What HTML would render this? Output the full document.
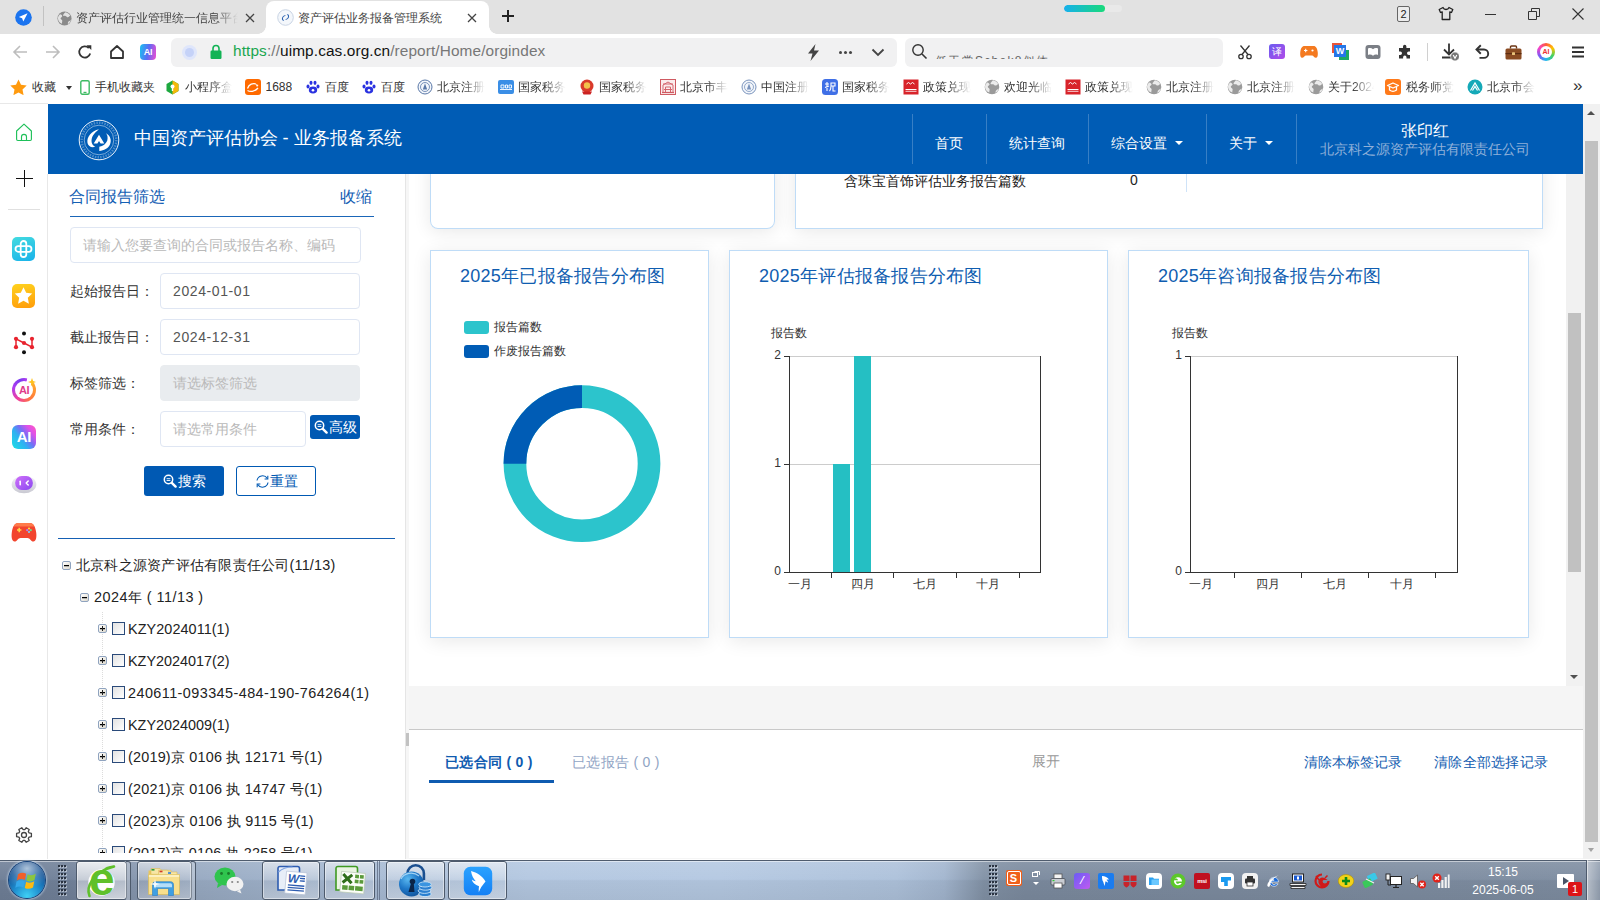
<!DOCTYPE html>
<html lang="zh">
<head>
<meta charset="utf-8">
<title>资产评估业务报备管理系统</title>
<style>
*{box-sizing:border-box;margin:0;padding:0}
html,body{width:1600px;height:900px;overflow:hidden;background:#fff}
body{font-family:"Liberation Sans",sans-serif;font-size:14px;color:#222;position:relative}
.abs{position:absolute}
/* ---------- browser chrome ---------- */
#tabbar{position:absolute;left:0;top:0;width:1600px;height:34px;background:#e2e2e2}
#tab2{position:absolute;left:266px;top:1px;width:223px;height:33px;background:#fff;border-radius:8px 8px 0 0}
#tab2:before,#tab2:after{content:"";position:absolute;bottom:0;width:8px;height:8px}
#tab2:before{left:-8px;background:radial-gradient(circle at 0 0,transparent 7.500px,#fff 8px)}
#tab2:after{right:-8px;background:radial-gradient(circle at 100% 0,transparent 7.500px,#fff 8px)}
.tabtxt{position:absolute;top:10px;font-size:12.5px;color:#333;white-space:nowrap;overflow:hidden}
#toolbar{position:absolute;left:0;top:34px;width:1600px;height:36px;background:#fff}
#urlbox{position:absolute;left:171px;top:4px;width:726px;height:29px;background:#f1f1f2;border-radius:6px}
#searchbox{position:absolute;left:905px;top:4px;width:318px;height:29px;background:#f1f1f2;border-radius:6px}
#url{position:absolute;left:62px;top:4px;font-size:15.400px;color:#777;white-space:nowrap;letter-spacing:0.1px}
#bookmarks{position:absolute;left:0;top:70px;width:1600px;height:34px;background:#fff}
.bm{position:absolute;top:9px;font-size:13px;color:#333;white-space:nowrap}
.bmi{position:absolute;top:9px;width:15px;height:15px;border-radius:3px}
/* ---------- left browser sidebar ---------- */
#bside{position:absolute;left:0;top:104px;width:48px;height:755px;background:#fff}
#bside:before{content:"";position:absolute;left:0;top:-1px;width:48px;height:1px;background:#e8e8e8}
#bside:after{content:"";position:absolute;left:47px;top:70px;width:1px;height:685px;background:#e8e8e8}
/* ---------- page ---------- */
#hdr{position:absolute;left:48px;top:104px;width:1535px;height:70px;background:#005cb5}
#oscroll{position:absolute;left:1583px;top:104px;width:17px;height:755px;background:#f1f1f1}
#leftpanel{position:absolute;left:48px;top:174px;width:357px;height:684px;background:#fff}
#split{position:absolute;left:405px;top:174px;width:4px;height:685px;background:linear-gradient(90deg,#e5e5e5 0,#e5e5e5 1px,#f6f6f6 1px)}
#main{position:absolute;left:409px;top:174px;width:1174px;height:685px;background:#f5f5f5}
#scrollarea{position:absolute;left:0;top:0;width:1174px;height:512px;background:#fff;overflow:hidden}
#iscroll{position:absolute;left:1157px;top:0;width:17px;height:512px;background:#f1f1f1}
#bottompanel{position:absolute;left:0;top:555px;width:1174px;height:129px;background:#fff;border-top:1px solid #c9c9c9}
.card{position:absolute;background:#fff;box-shadow:inset 0 0 0 1px #bfdcf7,0 3px 18px rgba(0,0,0,.09)}
.ctitle{position:absolute;left:30px;top:14px;font-size:18px;letter-spacing:.25px;color:#0f5db0;white-space:nowrap}

/* header */
#hdr .title{position:absolute;left:85.500px;top:22px;font-size:18.200px;color:#fff;white-space:nowrap;line-height:24px}
#hdr .sep{position:absolute;top:10px;width:1px;height:50px;background:rgba(255,255,255,.22)}
#hdr .nav{position:absolute;top:29px;font-size:14px;color:#fff;white-space:nowrap;line-height:20px}
#hdr .caret{display:inline-block;width:0;height:0;border-left:4px solid transparent;border-right:4px solid transparent;border-top:4px solid #fff;vertical-align:middle;margin-left:8px;margin-top:-3px}
#hdr .uname{position:absolute;left:1249px;width:256px;top:15px;text-align:center;font-size:16.400px;color:#fff;line-height:22px}
#hdr .ucomp{position:absolute;left:1249px;width:256px;top:35px;text-align:center;font-size:14px;color:#8fb0d9;line-height:20px;white-space:nowrap}
/* left panel */
#leftpanel .ptitle{position:absolute;left:21px;top:11.500px;font-size:16px;color:#1560b4;line-height:22px}
#leftpanel .pshrink{position:absolute;right:33px;top:11.500px;font-size:16px;color:#1560b4;line-height:22px}
#leftpanel .pline{position:absolute;left:22px;top:42px;width:304px;height:1px;background:#1a66b8}
.inp{position:absolute;background:#fff;border:1px solid #dfe6f3;border-radius:4px;font-size:14px;color:#555;line-height:35.500px;padding-left:12px;white-space:nowrap;overflow:hidden}
.inp.ph{color:#b9b9b9}
.lbl{position:absolute;left:22px;font-size:14px;color:#333;line-height:20px;white-space:nowrap}
.btnb{position:absolute;background:#0059b3;color:#fff;border-radius:3px;font-size:14px;text-align:center;white-space:nowrap}
.btnw{position:absolute;background:#fff;color:#0059b3;border:1px solid #0059b3;border-radius:3px;font-size:14px;text-align:center;white-space:nowrap}
#leftpanel .hline{position:absolute;left:10px;top:364px;width:337px;height:1px;background:#1560b4}
.tr{position:absolute;font-size:14.4px;color:#222;line-height:20px;white-space:nowrap}
.tbox{position:absolute;width:9px;height:9px;border:1px solid #8fa3bf;background:linear-gradient(135deg,#fff,#dcd8cc);border-radius:2px}
.tbox:before{content:"";position:absolute;left:1px;top:3px;width:5px;height:1px;background:#000;box-shadow:0 .5px 0 rgba(0,0,0,.5)}
.tbox.plus:after{content:"";position:absolute;left:3px;top:1px;width:1px;height:5px;background:#222}
.chk{position:absolute;width:13px;height:13px;border:1px solid #2a4a7a;background:linear-gradient(135deg,#e2e2e2,#fff);}

.ax{position:absolute;font-size:12px;color:#333;line-height:14px;white-space:nowrap}
.arrow-up{position:absolute;width:0;height:0;border-left:4px solid transparent;border-right:4px solid transparent;border-bottom:4px solid #505050}
.arrow-dn{position:absolute;width:0;height:0;border-left:4px solid transparent;border-right:4px solid transparent;border-top:4px solid #505050}
.thumb{position:absolute;background:#c1c1c1}
#bottompanel .t{position:absolute;font-size:14px;line-height:20px;white-space:nowrap}
/* ---------- taskbar ---------- */

#taskbar{position:absolute;left:0;top:860px;width:1600px;height:40px;background:linear-gradient(#4f5c6e 0,#4f5c6e 1px,rgba(255,255,255,.55) 1px,rgba(255,255,255,.55) 2px,rgba(255,255,255,.10) 2px,rgba(255,255,255,.02) 48%,rgba(0,0,0,.04) 52%,rgba(0,0,0,.07) 100%),linear-gradient(90deg,#6f7f97 0,#72829a 4.400%,#8595ad 8%,#98aac2 12.500%,#a6b9d2 22%,#b4c8e1 33%,#b5c9e2 45%,#aec2db 56%,#a3b6cf 59%,#8292a6 61.500%,#7c8b9f 64%,#7f8ea2 100%)}
.tbtn{position:absolute;top:3px;height:39px;border:1px solid #4d5a6c;border-radius:3px;background:linear-gradient(rgba(255,255,255,.55),rgba(255,255,255,.25) 48%,rgba(255,255,255,.12) 52%,rgba(255,255,255,.3));box-shadow:inset 0 0 0 1px rgba(255,255,255,.45)}
.tbtn.stack:after{content:"";position:absolute;right:-5px;top:-1px;width:4px;height:39px;border:1px solid #4d5a6c;border-left:0;border-radius:0 3px 3px 0;background:rgba(255,255,255,.28)}
.tray{position:absolute;top:15px;width:16px;height:16px}
</style>
</head>
<body>
<!-- TAB BAR -->
<div id="tabbar">
  <svg class="abs" style="left:15px;top:9px" width="17" height="17" viewBox="0 0 17 17"><circle cx="8.5" cy="8.500" r="8.300" fill="#1b74ef"/><path d="M12.600 4.300L3.800 8.100l3.300 1.100 1.200 3.400z" fill="#fff"/></svg>
  <div class="abs" style="left:43px;top:6px;width:1px;height:20px;background:#c2c2c2"></div>
  <svg class="abs" style="left:56.5px;top:10.5px" width="15" height="15" viewBox="0 0 16 16"><circle cx="8" cy="8" r="7.5" fill="#8a8a8a"/><path d="M3.2 3.5c1.5.4 2.6 1.2 2.3 2.3-.3 1-1.8 1-1.7 2.2.1 1 1.6 1.1 1.8 2.2.2 1-.5 2-.2 3.4C2.9 12.600 1.200 10.600 1 8c0-1.800.8-3.300 2.200-4.500zM9 1.200c2.200.4 4.100 1.700 5.200 3.700-1 .5-1.500 1.700-2.700 1.700-1.100 0-1.300-1.200-2.500-1.400-1-.2-1.700.5-2.300-.2-.5-.700.4-1.600 1.100-2.500.4-.5.800-1 1.200-1.300zM14.800 9.500c-.4 1.800-1.500 3.400-3 4.400-.5-.900-.200-1.700.3-2.500.5-.700 1.700-1.200 2.700-1.900z" fill="#fff" opacity=".75"/></svg>
  <div class="tabtxt" style="left:76px;top:10px;width:162px;line-height:16px;font-size:12px;color:#444;-webkit-mask-image:linear-gradient(90deg,#000 140px,transparent 162px)">资产评估行业管理统一信息平台</div>
  <svg class="abs" style="left:245px;top:13px" width="10" height="10" viewBox="0 0 10 10"><path d="M1 1l8 8M9 1l-8 8" stroke="#444" stroke-width="1.300"/></svg>
  <div id="tab2">
    <svg class="abs" style="left:11px;top:8px" width="17" height="17" viewBox="0 0 17 17"><circle cx="8.500" cy="8.500" r="7.800" fill="#f4f7fb" stroke="#c9d4e4" stroke-width="1"/><path d="M5 10.500c-.5-2.500 1.500-4.500 4-4.300l-1.500 1c-1.200.5-1.800 1.700-1.400 3l1.100 1.700c-1.200-.1-2-.6-2.200-1.400zM12 6.500c.5 2.500-1.500 4.500-4 4.300l1.500-1c1.200-.5 1.800-1.700 1.400-3L9.800 5.100c1.200.1 2 .6 2.200 1.400z" fill="#2a62b0"/></svg>
    <div class="tabtxt" style="left:32px;top:9px;line-height:16px;font-size:12px;color:#444">资产评估业务报备管理系统</div>
    <svg class="abs" style="left:201px;top:12px" width="10" height="10" viewBox="0 0 10 10"><path d="M1 1l8 8M9 1l-8 8" stroke="#444" stroke-width="1.300"/></svg>
  </div>
  <svg class="abs" style="left:501px;top:9px" width="14" height="14" viewBox="0 0 14 14"><path d="M7 1v12M1 7h12" stroke="#222" stroke-width="2"/></svg>
  <div class="abs" style="left:1064px;top:5px;width:58px;height:7px;border-radius:4px;background:#e9e9e9;overflow:hidden"><div style="width:41px;height:7px;border-radius:4px;background:linear-gradient(90deg,#17b0ec,#19da7a)"></div></div>
  <div class="abs" style="left:1397px;top:6px;width:13px;height:16px;border:1px solid #666;border-radius:2px;background:#ececec;font-size:11px;line-height:14px;text-align:center;color:#222">2</div>
  <svg class="abs" style="left:1438px;top:6px" width="16" height="15" viewBox="0 0 16 15"><path d="M5 1.500L1.200 3.500l1.300 3 1.700-.7V13.500h7.600V5.800l1.700.7 1.300-3L11 1.500c-.5 1.300-1.700 2-3 2s-2.500-.7-3-2z" fill="none" stroke="#222" stroke-width="1.300" stroke-linejoin="round"/></svg>
  <div class="abs" style="left:1485px;top:14px;width:11px;height:1px;background:#333"></div>
  <svg class="abs" style="left:1528px;top:8px" width="12" height="12" viewBox="0 0 12 12"><path d="M.5 3.500h8v8h-8zM3.500 3.500v-3h8v8h-3" fill="none" stroke="#333" stroke-width="1"/></svg>
  <svg class="abs" style="left:1572px;top:8px" width="12" height="12" viewBox="0 0 12 12"><path d="M.5.5l11 11M11.500.5l-11 11" stroke="#333" stroke-width="1.100"/></svg>
</div>
<!-- TOOLBAR -->
<div id="toolbar">
<svg class="abs" style="left:12.0px;top:10.0px" width="16" height="16" viewBox="0 0 16 16"><path d="M15 8H2M8 2L2 8l6 6" fill="none" stroke="#bdbdbd" stroke-width="1.600"/></svg>
<svg class="abs" style="left:45.0px;top:10.0px" width="16" height="16" viewBox="0 0 16 16"><path d="M1 8h13M8 2l6 6-6 6" fill="none" stroke="#bdbdbd" stroke-width="1.600"/></svg>
<svg class="abs" style="left:77.0px;top:10.0px" width="16" height="16" viewBox="0 0 16 16"><path d="M13.200 9.500A5.600 5.600 0 1 1 11.800 4" fill="none" stroke="#333" stroke-width="1.800"/><path d="M9.500 1.200h4.800v4.800z" fill="#333"/></svg>
<svg class="abs" style="left:109.0px;top:10.0px" width="16" height="16" viewBox="0 0 16 16"><path d="M2 7.500L8 2l6 5.500V14H2z" fill="none" stroke="#333" stroke-width="1.800" stroke-linejoin="round"/></svg>
<div class="abs" style="left:140px;top:10px;width:16px;height:16px;border-radius:4px;background:linear-gradient(100deg,#19c3f0,#5a6cf5 50%,#f24bd0);color:#fff;font-size:9px;font-weight:bold;line-height:16px;text-align:center;letter-spacing:-.3px">AI</div>
<div id="urlbox"><div class="abs" style="left:11px;top:7px;width:15px;height:15px;border-radius:50%;background:#dfe6fb"></div><div class="abs" style="left:14px;top:10px;width:9px;height:9px;border-radius:50%;background:#c5d2f8"></div><svg class="abs" style="left:39px;top:6px" width="12" height="16" viewBox="0 0 12 16"><rect x=".5" y="6.500" width="11" height="8.500" rx="1.200" fill="#12b355"/><path d="M3 7V4.500a3 3 0 0 1 6 0V7" fill="none" stroke="#12b355" stroke-width="1.600"/></svg><div id="url"><span style="color:#1aa64f">https</span>://<span style="color:#111">uimp.cas.org.cn</span>/report/Home/orgindex</div><svg class="abs" style="left:636px;top:6px" width="13" height="17" viewBox="0 0 13 17"><path d="M8.500 0L1 9.500h4.500L3.500 17 12 6.500H7z" fill="#444"/></svg><div class="abs" style="left:668px;top:13px;width:3px;height:3px;border-radius:50%;background:#444;box-shadow:5px 0 0 #444,10px 0 0 #444"></div><svg class="abs" style="left:700px;top:10px" width="14" height="9" viewBox="0 0 14 9"><path d="M1.500 1.500L7 7l5.500-5.500" fill="none" stroke="#444" stroke-width="1.800"/></svg></div>
<div id="searchbox"><svg class="abs" style="left:6px;top:5px" width="17" height="17" viewBox="0 0 17 17"><circle cx="7" cy="7" r="5.200" fill="none" stroke="#333" stroke-width="1.400"/><path d="M11 11l4.500 4.500" stroke="#333" stroke-width="1.600"/></svg><div class="abs" style="left:30px;top:15.500px;width:120px;height:5.500px;overflow:hidden"><div style="font-size:12px;line-height:14px;color:#666;white-space:nowrap;margin-top:0px;letter-spacing:1.300px">低于常Schek8似体</div></div></div>
<svg class="abs" style="left:1236.5px;top:10.0px" width="16" height="16" viewBox="0 0 16 16"><path d="M3.500 1.500L11 10.500M12.500 1.500L5 10.500" stroke="#333" stroke-width="1.300" fill="none"/><circle cx="4" cy="12.500" r="2.200" fill="none" stroke="#333" stroke-width="1.300"/><circle cx="12" cy="12.500" r="2.200" fill="none" stroke="#333" stroke-width="1.300"/></svg>
<div class="abs" style="left:1269px;top:10px;width:16px;height:15px;border-radius:3px;background:linear-gradient(135deg,#6b5cf0,#b04be8);color:#fff;font-size:10px;line-height:15px;text-align:center">译</div>
<svg class="abs" style="left:1300.0px;top:11.0px" width="18" height="14" viewBox="0 0 18 14"><path d="M4.500 1h9c2.500 0 3.800 2.500 4.200 6 .4 3.500-.2 5.500-1.700 5.800-1.500.3-2.500-2.300-4-2.300H6c-1.500 0-2.500 2.600-4 2.300C.5 12.500-.100 10.500.3 7 .7 3.500 2 1 4.500 1z" fill="#f47a20"/><circle cx="12.500" cy="5.500" r="1.100" fill="#fff"/><path d="M4 5.500h3.400M5.700 3.800v3.400" stroke="#fff" stroke-width="1.100"/></svg>
<div class="abs" style="left:1332px;top:9px;width:10px;height:10px;background:#e8553a"></div><div class="abs" style="left:1339px;top:16px;width:10px;height:10px;background:#1ea863"></div><div class="abs" style="left:1334px;top:11px;width:12px;height:12px;background:#2476e8;color:#fff;font-size:9px;font-weight:bold;line-height:12px;text-align:center">W</div>
<svg class="abs" style="left:1364.5px;top:10.0px" width="16" height="16" viewBox="0 0 16 16"><rect x=".5" y="1" width="15" height="14" rx="3" fill="#7b7f86"/><path d="M3 4.500c2-.8 3.500-.5 5 .7 1.500-1.200 3-1.500 5-.7v6.500c-2-.8-3.500-.5-5 .7-1.500-1.200-3-1.500-5-.7z" fill="#fff"/></svg>
<svg class="abs" style="left:1397.0px;top:10.0px" width="16" height="16" viewBox="0 0 16 16"><path d="M6 2.500a1.700 1.700 0 1 1 3.400 0V4H13v3.600h-1.300a1.700 1.700 0 1 0 0 3.400H13V14.500H9.500V13.200a1.700 1.700 0 1 0-3.400 0v1.300H2V11h1.300a1.700 1.700 0 1 0 0-3.400H2V4h4z" fill="#333"/></svg>
<div class="abs" style="left:1427px;top:9px;width:1px;height:18px;background:#d0d0d0"></div>
<svg class="abs" style="left:1441.0px;top:9.0px" width="18" height="18" viewBox="0 0 18 18"><path d="M8 .5v10.500M3 6.500L8 11.500 13 6.500M1 14.500h10" fill="none" stroke="#333" stroke-width="1.800"/><circle cx="14" cy="13.500" r="4.400" fill="#777" stroke="#fff" stroke-width=".6"/><path d="M12.200 12l1.800 3.200 1.800-3.200" stroke="#fff" stroke-width="1.200" fill="none"/></svg>
<svg class="abs" style="left:1474.0px;top:10.0px" width="16" height="16" viewBox="0 0 16 16"><path d="M3 5.500h7a4.200 4.200 0 0 1 0 8.400H5.500" fill="none" stroke="#333" stroke-width="1.900"/><path d="M6.800 1.300L2.500 5.500l4.300 4.200" fill="none" stroke="#333" stroke-width="1.900"/></svg>
<svg class="abs" style="left:1505.0px;top:10.5px" width="17" height="15" viewBox="0 0 17 15"><rect x=".5" y="3.500" width="16" height="11" rx="1.500" fill="#8a4b22"/><path d="M5.500 3.500V2a1 1 0 0 1 1-1h4a1 1 0 0 1 1 1v1.500" fill="none" stroke="#6b3514" stroke-width="1.400"/><rect x=".5" y="8" width="16" height="1.200" fill="#5c2c10"/><rect x="7" y="7.300" width="3" height="2.600" rx=".5" fill="#e8c27a"/></svg>
<div class="abs" style="left:1537px;top:9px;width:18px;height:18px;border-radius:50%;background:conic-gradient(#ff5a3c,#ffc400,#46d160,#22b8f0,#7a5cf5,#f542c8,#ff5a3c)"><div style="position:absolute;left:3px;top:3px;width:12px;height:12px;border-radius:50%;background:#fff;font-size:7px;line-height:12px;text-align:center;color:#e33;font-weight:bold">AI</div></div>
<svg class="abs" style="left:1571.0px;top:11.0px" width="14" height="14" viewBox="0 0 14 14"><path d="M1 2.500h12M1 7h12M1 11.500h12" stroke="#333" stroke-width="1.800"/></svg>
</div>
<!-- BOOKMARKS -->
<div id="bookmarks">
<svg class="abs" style="left:10.0px;top:9.0px" width="17" height="16" viewBox="0 0 17 16"><path d="M8.500.5l2.500 5.300 5.700.7-4.200 4 1.100 5.700-5.100-2.800-5.100 2.800 1.100-5.700-4.200-4 5.700-.7z" fill="#ff9a0e"/></svg><div class="abs" style="left:31.5px;top:9px;line-height:16px;font-size:12px;color:#333;white-space:nowrap;overflow:hidden;">收藏</div><div class="abs" style="left:65.500px;top:16px;width:0;height:0;border-left:3.500px solid transparent;border-right:3.500px solid transparent;border-top:4px solid #333"></div><svg class="abs" style="left:80.0px;top:9.5px" width="10" height="15" viewBox="0 0 10 15"><rect x=".8" y=".8" width="8.400" height="13.400" rx="1.500" fill="#fff" stroke="#3dbb63" stroke-width="1.400"/><rect x="3.500" y="11.800" width="3" height="1.200" fill="#3dbb63"/></svg><div class="abs" style="left:94.5px;top:9px;line-height:16px;font-size:12px;color:#333;white-space:nowrap;overflow:hidden;">手机收藏夹</div><svg class="abs" style="left:165.5px;top:9.5px" width="13" height="15" viewBox="0 0 13 15"><path d="M6.500.5L12.500 4v7L6.500 14.500.5 11V4z" fill="#1da83f"/><path d="M6.500.5L12.500 4v7L6.500 14.500z" fill="#f5b80a"/><circle cx="6.500" cy="6.500" r="2" fill="#fff"/><rect x="5.800" y="7" width="1.400" height="4" fill="#fff"/></svg><div class="abs" style="left:184.5px;top:9px;line-height:16px;font-size:12px;color:#333;white-space:nowrap;overflow:hidden;width:47px;-webkit-mask-image:linear-gradient(90deg,#000 25px,transparent 47px);">小程序盒子</div><svg class="abs" style="left:245.0px;top:9.0px" width="16" height="16" viewBox="0 0 16 16"><rect width="16" height="16" rx="3" fill="#ff6a00"/><path d="M2.500 11.500c2.500 1.500 7 1.500 10.500-2.500M11 5c-3-1-7 0-8.500 4.500" stroke="#fff" stroke-width="1.300" fill="none"/><path d="M10.500 5l3 1-1.500 2z" fill="#fff"/></svg><div class="abs" style="left:265.5px;top:9px;line-height:16px;font-size:12px;color:#333;white-space:nowrap;overflow:hidden;">1688</div><svg class="abs" style="left:304.5px;top:9.0px" width="16" height="16" viewBox="0 0 16 16"><ellipse cx="8" cy="11" rx="4.200" ry="3.400" fill="#2a32e0"/><ellipse cx="3" cy="7.500" rx="1.500" ry="2" fill="#2a32e0"/><ellipse cx="13" cy="7.500" rx="1.500" ry="2" fill="#2a32e0"/><ellipse cx="6" cy="3.800" rx="1.500" ry="2.100" fill="#2a32e0"/><ellipse cx="10" cy="3.800" rx="1.500" ry="2.100" fill="#2a32e0"/><circle cx="8" cy="11.200" r="1.300" fill="#fff"/></svg><div class="abs" style="left:325px;top:9px;line-height:16px;font-size:12px;color:#333;white-space:nowrap;overflow:hidden;">百度</div><svg class="abs" style="left:360.5px;top:9.0px" width="16" height="16" viewBox="0 0 16 16"><ellipse cx="8" cy="11" rx="4.200" ry="3.400" fill="#2a32e0"/><ellipse cx="3" cy="7.500" rx="1.500" ry="2" fill="#2a32e0"/><ellipse cx="13" cy="7.500" rx="1.500" ry="2" fill="#2a32e0"/><ellipse cx="6" cy="3.800" rx="1.500" ry="2.100" fill="#2a32e0"/><ellipse cx="10" cy="3.800" rx="1.500" ry="2.100" fill="#2a32e0"/><circle cx="8" cy="11.200" r="1.300" fill="#fff"/></svg><div class="abs" style="left:381px;top:9px;line-height:16px;font-size:12px;color:#333;white-space:nowrap;overflow:hidden;">百度</div><svg class="abs" style="left:416.5px;top:9.0px" width="16" height="16" viewBox="0 0 16 16"><circle cx="8" cy="8" r="7" fill="#f3f6fb" stroke="#5a78a8" stroke-width="1"/><circle cx="8" cy="8" r="4.500" fill="none" stroke="#5a78a8" stroke-width=".8"/><path d="M8 4.500l2.200 6H5.800z" fill="#5a78a8"/></svg><div class="abs" style="left:436.5px;top:9px;line-height:16px;font-size:12px;color:#333;white-space:nowrap;overflow:hidden;width:48px;-webkit-mask-image:linear-gradient(90deg,#000 26px,transparent 48px);">北京注册会</div><svg class="abs" style="left:497.5px;top:9.0px" width="16" height="16" viewBox="0 0 16 16"><rect y="1" width="16" height="14" rx="2" fill="#3a8ee6"/><path d="M2 10.500h12M3 6h3v3H3zM7.500 6h2v3h-2zM11 6h2.500v3H11z" stroke="#fff" stroke-width=".9" fill="none"/></svg><div class="abs" style="left:518px;top:9px;line-height:16px;font-size:12px;color:#333;white-space:nowrap;overflow:hidden;width:48px;-webkit-mask-image:linear-gradient(90deg,#000 26px,transparent 48px);">国家税务总</div><svg class="abs" style="left:578.5px;top:9.0px" width="16" height="16" viewBox="0 0 16 16"><circle cx="8" cy="7" r="6.500" fill="#d93a2b"/><circle cx="8" cy="6.500" r="3.200" fill="#f2c14a"/><path d="M3 12.500h10l-1.500 3h-7z" fill="#c22"/></svg><div class="abs" style="left:599px;top:9px;line-height:16px;font-size:12px;color:#333;white-space:nowrap;overflow:hidden;width:48px;-webkit-mask-image:linear-gradient(90deg,#000 26px,transparent 48px);">国家税务总</div><svg class="abs" style="left:659.5px;top:9.0px" width="16" height="16" viewBox="0 0 16 16"><rect x=".5" y=".5" width="15" height="15" fill="#fbecec" stroke="#cf5a62" stroke-width="1"/><path d="M3 13V6l5-3 5 3v7M5.500 13V8h5v5M3 5h10M4 10.500h8" stroke="#d4666e" stroke-width="1" fill="none"/><path d="M2 13.500h12" stroke="#cf5a62" stroke-width="1.200"/></svg><div class="abs" style="left:680px;top:9px;line-height:16px;font-size:12px;color:#333;white-space:nowrap;overflow:hidden;width:48px;-webkit-mask-image:linear-gradient(90deg,#000 26px,transparent 48px);">北京市丰台</div><svg class="abs" style="left:740.5px;top:9.0px" width="16" height="16" viewBox="0 0 16 16"><circle cx="8" cy="8" r="7" fill="#f3f6fb" stroke="#7a94bd" stroke-width="1"/><circle cx="8" cy="8" r="4.500" fill="none" stroke="#7a94bd" stroke-width=".8"/><path d="M8 4.500l2.200 6H5.800z" fill="#7a94bd"/></svg><div class="abs" style="left:761px;top:9px;line-height:16px;font-size:12px;color:#333;white-space:nowrap;overflow:hidden;width:48px;-webkit-mask-image:linear-gradient(90deg,#000 26px,transparent 48px);">中国注册会</div><svg class="abs" style="left:822.0px;top:9.0px" width="16" height="16" viewBox="0 0 16 16"><rect width="16" height="16" rx="3.500" fill="#3f6fe6"/><path d="M3 5h4M5 3v9M3 8.500l4-1.500M9 4h4v3H9zM9 7c0 3-1 4.500-1.500 5M11 7v5h2.500" stroke="#fff" stroke-width="1.100" fill="none"/></svg><div class="abs" style="left:842px;top:9px;line-height:16px;font-size:12px;color:#333;white-space:nowrap;overflow:hidden;width:48px;-webkit-mask-image:linear-gradient(90deg,#000 26px,transparent 48px);">国家税务总</div><svg class="abs" style="left:903.0px;top:9.0px" width="16" height="16" viewBox="0 0 16 16"><rect x=".5" y=".5" width="15" height="15" fill="#d8232a"/><path d="M2.500 10.500h11M3.500 5l2-1.500 2 1.500 2-1.500 2 1.500" stroke="#fff" stroke-width="1" fill="none"/><rect x="2.500" y="11.800" width="11" height="1" fill="#fff" opacity=".8"/></svg><div class="abs" style="left:923px;top:9px;line-height:16px;font-size:12px;color:#333;white-space:nowrap;overflow:hidden;width:48px;-webkit-mask-image:linear-gradient(90deg,#000 26px,transparent 48px);">政策兑现平</div><svg class="abs" style="left:984.0px;top:9.0px" width="16" height="16" viewBox="0 0 16 16"><circle cx="8" cy="8" r="7.300" fill="#9a9a9a"/><path d="M3.200 3.500c1.500.4 2.600 1.200 2.300 2.300-.3 1-1.800 1-1.700 2.200.1 1 1.600 1.100 1.800 2.200.2 1-.5 2-.2 3.400C2.900 12.600 1.200 10.600 1 8c0-1.800.8-3.300 2.200-4.500zM9 1.200c2.200.4 4.100 1.700 5.200 3.700-1 .5-1.500 1.700-2.700 1.700-1.100 0-1.300-1.200-2.500-1.400-1-.2-1.700.5-2.300-.2-.5-.7.4-1.600 1.100-2.500.4-.5.800-1 1.200-1.300zM14.800 9.500c-.4 1.800-1.500 3.400-3 4.400-.5-.9-.2-1.700.3-2.500.5-.7 1.700-1.200 2.700-1.900z" fill="#fff" opacity=".8"/></svg><div class="abs" style="left:1004px;top:9px;line-height:16px;font-size:12px;color:#333;white-space:nowrap;overflow:hidden;width:48px;-webkit-mask-image:linear-gradient(90deg,#000 26px,transparent 48px);">欢迎光临北</div><svg class="abs" style="left:1064.5px;top:9.0px" width="16" height="16" viewBox="0 0 16 16"><rect x=".5" y=".5" width="15" height="15" fill="#d8232a"/><path d="M2.500 10.500h11M3.500 5l2-1.500 2 1.500 2-1.500 2 1.500" stroke="#fff" stroke-width="1" fill="none"/><rect x="2.500" y="11.800" width="11" height="1" fill="#fff" opacity=".8"/></svg><div class="abs" style="left:1085px;top:9px;line-height:16px;font-size:12px;color:#333;white-space:nowrap;overflow:hidden;width:48px;-webkit-mask-image:linear-gradient(90deg,#000 26px,transparent 48px);">政策兑现平</div><svg class="abs" style="left:1146.0px;top:9.0px" width="16" height="16" viewBox="0 0 16 16"><circle cx="8" cy="8" r="7.300" fill="#9a9a9a"/><path d="M3.200 3.500c1.500.4 2.600 1.200 2.300 2.300-.3 1-1.800 1-1.700 2.200.1 1 1.600 1.100 1.800 2.200.2 1-.5 2-.2 3.400C2.900 12.600 1.200 10.600 1 8c0-1.800.8-3.300 2.200-4.500zM9 1.200c2.200.4 4.100 1.700 5.200 3.700-1 .5-1.500 1.700-2.700 1.700-1.100 0-1.300-1.200-2.500-1.400-1-.2-1.700.5-2.300-.2-.5-.7.4-1.600 1.100-2.500.4-.5.800-1 1.200-1.300zM14.800 9.500c-.4 1.800-1.500 3.400-3 4.400-.5-.9-.2-1.700.3-2.500.5-.7 1.700-1.200 2.700-1.900z" fill="#fff" opacity=".8"/></svg><div class="abs" style="left:1166px;top:9px;line-height:16px;font-size:12px;color:#333;white-space:nowrap;overflow:hidden;width:48px;-webkit-mask-image:linear-gradient(90deg,#000 26px,transparent 48px);">北京注册会</div><svg class="abs" style="left:1227.0px;top:9.0px" width="16" height="16" viewBox="0 0 16 16"><circle cx="8" cy="8" r="7.300" fill="#9a9a9a"/><path d="M3.200 3.500c1.500.4 2.600 1.200 2.300 2.300-.3 1-1.800 1-1.700 2.200.1 1 1.600 1.100 1.800 2.200.2 1-.5 2-.2 3.400C2.900 12.600 1.200 10.600 1 8c0-1.800.8-3.300 2.200-4.500zM9 1.200c2.200.4 4.100 1.700 5.200 3.700-1 .5-1.500 1.700-2.700 1.700-1.100 0-1.300-1.200-2.500-1.400-1-.2-1.700.5-2.300-.2-.5-.7.4-1.600 1.100-2.500.4-.5.800-1 1.200-1.300zM14.800 9.500c-.4 1.800-1.500 3.400-3 4.400-.5-.9-.2-1.700.3-2.500.5-.7 1.700-1.200 2.700-1.900z" fill="#fff" opacity=".8"/></svg><div class="abs" style="left:1247px;top:9px;line-height:16px;font-size:12px;color:#333;white-space:nowrap;overflow:hidden;width:48px;-webkit-mask-image:linear-gradient(90deg,#000 26px,transparent 48px);">北京注册会</div><svg class="abs" style="left:1308.0px;top:9.0px" width="16" height="16" viewBox="0 0 16 16"><circle cx="8" cy="8" r="7.300" fill="#9a9a9a"/><path d="M3.200 3.500c1.500.4 2.600 1.200 2.300 2.300-.3 1-1.800 1-1.700 2.200.1 1 1.600 1.100 1.800 2.200.2 1-.5 2-.2 3.400C2.900 12.600 1.200 10.600 1 8c0-1.800.8-3.300 2.200-4.500zM9 1.200c2.200.4 4.100 1.700 5.200 3.700-1 .5-1.500 1.700-2.700 1.700-1.100 0-1.300-1.200-2.500-1.400-1-.2-1.700.5-2.300-.2-.5-.7.4-1.600 1.100-2.500.4-.5.800-1 1.200-1.300zM14.800 9.500c-.4 1.800-1.500 3.400-3 4.400-.5-.9-.2-1.700.3-2.500.5-.7 1.700-1.200 2.700-1.900z" fill="#fff" opacity=".8"/></svg><div class="abs" style="left:1328px;top:9px;line-height:16px;font-size:12px;color:#333;white-space:nowrap;overflow:hidden;width:46px;-webkit-mask-image:linear-gradient(90deg,#000 24px,transparent 46px);">关于2024</div><svg class="abs" style="left:1385.0px;top:9.0px" width="16" height="16" viewBox="0 0 16 16"><rect width="16" height="16" rx="3" fill="#ff7a1a"/><path d="M2.500 6.500L8 4l5.500 2.500L8 9zM4.500 8v3c2 1.500 5 1.500 7 0V8" fill="none" stroke="#fff" stroke-width="1.300" stroke-linejoin="round"/></svg><div class="abs" style="left:1406px;top:9px;line-height:16px;font-size:12px;color:#333;white-space:nowrap;overflow:hidden;width:48px;-webkit-mask-image:linear-gradient(90deg,#000 26px,transparent 48px);">税务师党建</div><svg class="abs" style="left:1467.0px;top:9.0px" width="16" height="16" viewBox="0 0 16 16"><circle cx="8" cy="8" r="7.500" fill="#15a9b8"/><path d="M3.500 11.500L8 4l4.500 7.500M5.500 11.500L8 7.500l2.500 4" stroke="#fff" stroke-width="1.200" fill="none"/></svg><div class="abs" style="left:1487px;top:9px;line-height:16px;font-size:12px;color:#333;white-space:nowrap;overflow:hidden;width:48px;-webkit-mask-image:linear-gradient(90deg,#000 26px,transparent 48px);">北京市会计</div><div class="abs" style="left:1573px;top:7px;font-size:17px;line-height:18px;color:#333">»</div>
</div>
<!-- BROWSER SIDEBAR -->
<div id="bside">
<svg class="abs" style="left:15px;top:18.500px" width="18" height="19" viewBox="0 0 18 19"><path d="M1.600 8L9 1.200 16.400 8v8.300a1.200 1.200 0 0 1-1.200 1.200H2.800a1.200 1.200 0 0 1-1.200-1.200z" fill="none" stroke="#1fc05a" stroke-width="1.150" stroke-linejoin="round"/><path d="M6.500 17.500v-3.700a2.500 2.500 0 0 1 5 0v3.700" fill="none" stroke="#1fc05a" stroke-width="1.150"/></svg><svg class="abs" style="left:16px;top:66px" width="17" height="17" viewBox="0 0 17 17" shape-rendering="crispEdges"><path d="M8.500 0v17M0 8.500h17" stroke="#111" stroke-width="1"/></svg><div class="abs" style="left:8px;top:105px;width:32px;height:1px;background:#e0e0e0"></div><div class="abs" style="left:12px;top:133px;width:23px;height:24px;border-radius:5px;background:linear-gradient(160deg,#43dbe0,#19b2ea)"></div><svg class="abs" style="left:12.0px;top:133.0px" width="23" height="24" viewBox="0 0 23 24"><rect x="8.700" y="4" width="5.600" height="16" rx="2.800" fill="none" stroke="#fff" stroke-width="1.800"/><rect x="3.500" y="9.200" width="16" height="5.600" rx="2.800" fill="none" stroke="#fff" stroke-width="1.800"/></svg><div class="abs" style="left:12px;top:180px;width:23px;height:24px;border-radius:5px;background:linear-gradient(170deg,#ffd21e,#ff9c0a)"></div><svg class="abs" style="left:12.0px;top:180.0px" width="23" height="24" viewBox="0 0 23 24"><path d="M11.500 3.200l2.700 5.500 6 .8-4.400 4.200 1.100 6-5.400-2.900-5.400 2.900 1.100-6L2.800 9.500l6-.8z" fill="#fff"/></svg><svg class="abs" style="left:12.0px;top:226.0px" width="24" height="26" viewBox="0 0 24 26"><path d="M4 8.800v8.400M20 8.800v8.400M4 8.800L12 13l8 4.200" stroke="#e8232e" stroke-width="1.500" fill="none"/><circle cx="4" cy="8.800" r="2.100" fill="#e8232e"/><circle cx="20" cy="8.800" r="2.100" fill="#e8232e"/><circle cx="4" cy="17.200" r="2.100" fill="#e8232e"/><circle cx="20" cy="17.200" r="2.100" fill="#e8232e"/><circle cx="12" cy="13" r="2.100" fill="#e8232e"/><circle cx="12" cy="3.600" r="2" fill="#111"/><circle cx="12" cy="22.200" r="2" fill="#111"/></svg><div class="abs" style="left:12px;top:274px;width:24px;height:24px;border-radius:50%;background:conic-gradient(from 50deg,#ffb02a,#ff7a3c 25%,#f0409a 45%,#b03cf0 65%,#7a3cf0 80%,#b03cf0 90%,#fff 91%,#fff 100%)"><div style="position:absolute;left:3px;top:3px;width:18px;height:18px;border-radius:50%;background:#fff;font-size:11px;font-weight:bold;line-height:18px;text-align:center;color:#e03c8a;letter-spacing:-.5px">AI</div></div><svg class="abs" style="left:27.5px;top:273.5px" width="8" height="8" viewBox="0 0 8 8"><path d="M4 0l1.100 2.900L8 4 5.100 5.100 4 8 2.900 5.100 0 4l2.900-1.100z" fill="#ffc21e"/></svg><div class="abs" style="left:12px;top:321px;width:24px;height:24px;border-radius:6px;background:linear-gradient(52deg,#1fd6e6 8%,#2fb0f2 38%,#7a6cf5 58%,#e050e8 78%,#ff5ac0 98%);color:#fff;font-size:15px;font-weight:bold;line-height:24px;text-align:center;letter-spacing:-.3px">AI</div><svg class="abs" style="left:11.0px;top:369.0px" width="26" height="22" viewBox="0 0 26 22"><defs><linearGradient id="rb" x1="0" y1="0" x2="0" y2="1"><stop offset="0" stop-color="#f4f4f8"/><stop offset="1" stop-color="#c9c9d2"/></linearGradient><linearGradient id="rp" x1="0" y1="0" x2="1" y2="1"><stop offset="0" stop-color="#d070fa"/><stop offset="1" stop-color="#8a48f0"/></linearGradient></defs><ellipse cx="13" cy="11.500" rx="12.300" ry="8.800" fill="url(#rb)"/><rect x="4.200" y="3" width="17.600" height="14" rx="6.500" fill="url(#rp)"/><path d="M9.200 8.200v3.600" stroke="#fff" stroke-width="1.600" stroke-linecap="round"/><path d="M17.200 8l-2 2 2 2" stroke="#fff" stroke-width="1.500" stroke-linecap="round" stroke-linejoin="round" fill="none"/></svg><svg class="abs" style="left:11.0px;top:417.0px" width="26" height="22" viewBox="0 0 26 22"><path d="M7 2h12c3.500 0 5.500 4 6.200 9.500.7 5.500-.5 8.500-2.700 9-2.200.5-3.500-3.500-6-3.500h-7c-2.500 0-3.800 4-6 3.500-2.200-.5-3.400-3.500-2.700-9C1.500 6 3.500 2 7 2z" fill="#f2452e"/><path d="M7 2h12c2 0 3.500 1.300 4.500 3.500H2.500C3.500 3.300 5 2 7 2z" fill="#ff7a4a"/><path d="M6 9h4.400M8.200 6.800v4.400" stroke="#ffd84a" stroke-width="1.500"/><circle cx="18" cy="7.500" r="1.100" fill="#ffd84a"/><circle cx="18" cy="11" r="1.100" fill="#7ad0ff"/><circle cx="16.200" cy="9.200" r="1.100" fill="#b07af8"/><circle cx="19.800" cy="9.200" r="1.100" fill="#6ae08a"/></svg><svg class="abs" style="left:15px;top:721.600px" width="18" height="18" viewBox="0 0 18 18"><path d="M16.41 7.29L16.41 10.71L14.10 11.06L13.33 12.39L14.18 14.56L11.22 16.27L9.77 14.45L8.23 14.45L6.78 16.27L3.82 14.56L4.67 12.39L3.90 11.06L1.59 10.71L1.59 7.29L3.90 6.94L4.67 5.61L3.82 3.44L6.78 1.73L8.23 3.55L9.77 3.55L11.22 1.73L14.18 3.44L13.33 5.61L14.10 6.94Z" fill="none" stroke="#444" stroke-width="1.300" stroke-linejoin="round"/><circle cx="9" cy="9" r="2.500" fill="none" stroke="#444" stroke-width="1.300"/></svg>
</div>
<!-- PAGE -->
<div id="hdr">
  <svg class="abs" style="left:29px;top:13.500px" width="44" height="44" viewBox="0 0 44 44">
    <circle cx="22" cy="22" r="19.800" fill="none" stroke="#fff" stroke-width="1" opacity=".92"/>
    <circle cx="22" cy="22" r="14.800" fill="none" stroke="#fff" stroke-width=".8" opacity=".6"/><circle cx="22" cy="22" r="17.300" fill="none" stroke="#fff" stroke-width="2.400" stroke-dasharray="1.500 1.200" opacity=".3"/>
    <path d="M22 11.300C14.500 13 9.500 19 10.500 25c.8 3.500 4.300 5 7.800 3.700-2.800-1.200-4.300-4.200-3.600-7.700.8-4 4.300-7.500 7.300-9.700z" fill="#fff"/>
    <path d="M29 15.300c4 2.200 6 6.700 4 11.200-2 4-6 6-10.700 6.500v-4.300c3.700-.7 6.700-2.700 8-6.200.7-3 .2-5.500-1.300-7.200z" fill="#fff"/>
    <path d="M22 16.800l5.300 8.800h-3.700L22 23l-1.600 2.600h-3.700z" fill="#fff"/>
  </svg>
  <div class="title">中国资产评估协会 - 业务报备系统</div>
  <div class="sep" style="left:864px"></div>
  <div class="sep" style="left:938px"></div>
  <div class="sep" style="left:1040px"></div>
  <div class="sep" style="left:1158px"></div>
  <div class="sep" style="left:1248px"></div>
  <div class="nav" style="left:887px">首页</div>
  <div class="nav" style="left:961px">统计查询</div>
  <div class="nav" style="left:1063px">综合设置<span class="caret"></span></div>
  <div class="nav" style="left:1181px">关于<span class="caret"></span></div>
  <div class="uname">张印红</div>
  <div class="ucomp">北京科之源资产评估有限责任公司</div>
</div>
<div id="oscroll">
  <div class="arrow-up" style="left:4px;top:7px"></div>
  <div class="thumb" style="left:2px;top:37px;width:13px;height:701px"></div>
  <div class="arrow-dn" style="left:4.500px;top:744px;border-top-color:#a3a3a3;border-left-width:3.500px;border-right-width:3.500px"></div>
</div>
<div id="leftpanel">
  <div class="ptitle">合同报告筛选</div><div class="pshrink">收缩</div><div class="pline"></div>
  <div class="inp ph" style="left:22px;top:53px;width:291px;height:36px;font-size:14px">请输入您要查询的合同或报告名称、编码</div>
  <div class="lbl" style="top:107px">起始报告日：</div><div class="inp" style="left:112px;top:99px;width:200px;height:36px;letter-spacing:.6px">2024-01-01</div>
  <div class="lbl" style="top:153px">截止报告日：</div><div class="inp" style="left:112px;top:145px;width:200px;height:36px;letter-spacing:.6px">2024-12-31</div>
  <div class="lbl" style="top:199px">标签筛选：</div><div class="inp ph" style="left:112px;top:191px;width:200px;height:36px;background:#e9ecef;border-color:#e9ecef">请选标签筛选</div>
  <div class="lbl" style="top:245px">常用条件：</div><div class="inp ph" style="left:112px;top:237px;width:146px;height:36px">请选常用条件</div>
  <div class="btnb" style="left:262px;top:241px;width:50px;height:24px;line-height:24px;text-align:left;padding-left:4px"><svg style="vertical-align:-2px;margin-right:1px" width="14" height="14" viewBox="0 0 14 14"><circle cx="5.500" cy="5.500" r="4.200" fill="none" stroke="#fff" stroke-width="1.500"/><path d="M3.600 4.700h3.800M3.600 6.500h3.800" stroke="#fff" stroke-width=".9"/><path d="M8.800 8.800l3.800 3.800" stroke="#fff" stroke-width="2.400" stroke-linecap="round"/></svg>高级</div>
  <div class="btnb" style="left:96px;top:292px;width:80px;height:30px;line-height:30px;text-align:left;padding-left:19px"><svg style="vertical-align:-2px;margin-right:1px" width="14" height="14" viewBox="0 0 14 14"><circle cx="5.500" cy="5.500" r="4.200" fill="none" stroke="#fff" stroke-width="1.500"/><path d="M3.600 4.700h3.800M3.600 6.500h3.800" stroke="#fff" stroke-width=".9"/><path d="M8.800 8.800l3.800 3.800" stroke="#fff" stroke-width="2.400" stroke-linecap="round"/></svg>搜索</div>
  <div class="btnw" style="left:188px;top:292px;width:80px;height:30px;line-height:28px;text-align:left;padding-left:18px"><svg style="vertical-align:-3px;margin-right:0" width="15" height="15" viewBox="0 0 15 15"><path d="M2 6.500A5.600 5.600 0 0 1 12.300 4.500M13 8.500A5.600 5.600 0 0 1 2.700 10.500" fill="none" stroke="#0059b3" stroke-width="1.100"/><path d="M12.800 1.800v3.200H9.600M2.200 13.200V10h3.200" fill="none" stroke="#0059b3" stroke-width="1.100"/></svg>重置</div>
  <div class="hline"></div>
  <div id="tree" style="position:absolute;left:0;top:0;width:357px;height:678.500px;overflow:hidden">
  <div class="abs" style="left:54px;top:438px;width:0;height:245px;border-left:1px dotted #dcdcdc"></div><div class="tbox" style="left:14px;top:387px"></div><div class="tr" style="left:28px;top:381px;letter-spacing:0.23px">北京科之源资产评估有限责任公司(11/13)</div>
  <div class="tbox" style="left:32px;top:419px"></div><div class="tr" style="left:46px;top:413px;letter-spacing:0.47px">2024年 ( 11/13 )</div>
  <div class="tbox plus" style="left:50px;top:450px"></div><div class="chk" style="left:64px;top:448px"></div><div class="tr" style="left:80px;top:445px;letter-spacing:0.08px">KZY2024011(1)</div>
  <div class="tbox plus" style="left:50px;top:482px"></div><div class="chk" style="left:64px;top:480px"></div><div class="tr" style="left:80px;top:477px;letter-spacing:0.0px">KZY2024017(2)</div>
  <div class="tbox plus" style="left:50px;top:514px"></div><div class="chk" style="left:64px;top:512px"></div><div class="tr" style="left:80px;top:509px;letter-spacing:0.44px">240611-093345-484-190-764264(1)</div>
  <div class="tbox plus" style="left:50px;top:546px"></div><div class="chk" style="left:64px;top:544px"></div><div class="tr" style="left:80px;top:541px;letter-spacing:0.0px">KZY2024009(1)</div>
  <div class="tbox plus" style="left:50px;top:578px"></div><div class="chk" style="left:64px;top:576px"></div><div class="tr" style="left:80px;top:573px;letter-spacing:0.21px">(2019)京 0106 执 12171 号(1)</div>
  <div class="tbox plus" style="left:50px;top:610px"></div><div class="chk" style="left:64px;top:608px"></div><div class="tr" style="left:80px;top:605px;letter-spacing:0.21px">(2021)京 0106 执 14747 号(1)</div>
  <div class="tbox plus" style="left:50px;top:642px"></div><div class="chk" style="left:64px;top:640px"></div><div class="tr" style="left:80px;top:637px;letter-spacing:0.24px">(2023)京 0106 执 9115 号(1)</div>
  <div class="tbox plus" style="left:50px;top:674px"></div><div class="chk" style="left:64px;top:672px"></div><div class="tr" style="left:80px;top:669px;letter-spacing:0.15px">(2017)京 0106 执 2258 号(1)</div>
  </div>
</div>
<div id="split"><div class="abs" style="left:1px;top:559px;width:3px;height:13px;background:#c2c2c2"></div></div>
<div id="main">
  <div id="scrollarea">
    <div class="card" style="left:21px;top:-20px;width:345px;height:75px;border-radius:8px"></div>
    <div class="card" style="left:386px;top:-20px;width:748px;height:75px">
      <div class="abs" style="left:49px;top:17px;font-size:14px;line-height:20px;color:#222;white-space:nowrap">含珠宝首饰评估业务报告篇数</div>
      <div class="abs" style="left:335px;top:16px;font-size:14px;line-height:20px;color:#222">0</div>
      <div class="abs" style="left:391px;top:0;width:1px;height:38px;background:#cfe3f8"></div>
    </div>
    <div class="card" style="left:21px;top:76px;width:279px;height:388px">
      <div class="ctitle">2025年已报备报告分布图</div>
      <svg class="abs" style="left:0;top:0" width="278" height="386" viewBox="0 0 278 386">
<circle cx="152" cy="213.7" r="67.05000000000001" fill="none" stroke="#2cc4cc" stroke-width="22.700000000000003"/>
<path d="M84.94999999999999 213.7 A67.05000000000001 67.05000000000001 0 0 1 152 146.64999999999998" fill="none" stroke="#005cb5" stroke-width="22.700000000000003"/>
<rect x="34" y="71" width="25" height="13" rx="3" fill="#2cc4cc"/>
<rect x="34" y="95" width="25" height="13" rx="3" fill="#005cb5"/>
</svg>
<div class="ax" style="left:64px;top:70px">报告篇数</div>
<div class="ax" style="left:64px;top:94px">作废报告篇数</div>
    </div>
    <div class="card" style="left:320px;top:76px;width:379px;height:388px">
      <div class="ctitle">2025年评估报备报告分布图</div>
      <svg class="abs" style="left:0;top:0" width="351" height="387" viewBox="0 0 351 387" shape-rendering="crispEdges"><rect x="60" y="214" width="252" height="1" fill="#ccc"/><rect x="60" y="106" width="252" height="1" fill="#ccc"/><rect x="104" y="214" width="17" height="108" fill="#25bfc3"/><rect x="125" y="106" width="17" height="216" fill="#25bfc3"/><rect x="60" y="106" width="1" height="217" fill="#333"/><rect x="311" y="106" width="1" height="217" fill="#333"/><rect x="55" y="322" width="257" height="1" fill="#333"/><rect x="55" y="214" width="5" height="1" fill="#333"/><rect x="55" y="106" width="5" height="1" fill="#333"/><rect x="102" y="322" width="1" height="6" fill="#333"/><rect x="164" y="322" width="1" height="6" fill="#333"/><rect x="227" y="322" width="1" height="6" fill="#333"/><rect x="290" y="322" width="1" height="6" fill="#333"/></svg><div class="ax" style="left:42px;top:76px">报告数</div><div class="ax" style="left:38px;width:14px;text-align:right;top:314px">0</div><div class="ax" style="left:38px;width:14px;text-align:right;top:206px">1</div><div class="ax" style="left:38px;width:14px;text-align:right;top:98px">2</div><div class="ax" style="left:50.8px;width:40px;text-align:center;top:327px">一月</div><div class="ax" style="left:113.5px;width:40px;text-align:center;top:327px">四月</div><div class="ax" style="left:176.3px;width:40px;text-align:center;top:327px">七月</div><div class="ax" style="left:239.1px;width:40px;text-align:center;top:327px">十月</div>
    </div>
    <div class="card" style="left:719px;top:76px;width:401px;height:388px">
      <div class="ctitle">2025年咨询报备报告分布图</div>
      <svg class="abs" style="left:0;top:0" width="369" height="387" viewBox="0 0 369 387" shape-rendering="crispEdges"><rect x="62" y="106" width="268" height="1" fill="#ccc"/><rect x="62" y="106" width="1" height="217" fill="#333"/><rect x="329" y="106" width="1" height="217" fill="#333"/><rect x="57" y="322" width="273" height="1" fill="#333"/><rect x="57" y="106" width="5" height="1" fill="#333"/><rect x="106" y="322" width="1" height="6" fill="#333"/><rect x="173" y="322" width="1" height="6" fill="#333"/><rect x="240" y="322" width="1" height="6" fill="#333"/><rect x="307" y="322" width="1" height="6" fill="#333"/></svg><div class="ax" style="left:44px;top:76px">报告数</div><div class="ax" style="left:40px;width:14px;text-align:right;top:314px">0</div><div class="ax" style="left:40px;width:14px;text-align:right;top:98px">1</div><div class="ax" style="left:53.4px;width:40px;text-align:center;top:327px">一月</div><div class="ax" style="left:120.2px;width:40px;text-align:center;top:327px">四月</div><div class="ax" style="left:187.0px;width:40px;text-align:center;top:327px">七月</div><div class="ax" style="left:253.8px;width:40px;text-align:center;top:327px">十月</div>
    </div>
    <div id="iscroll">
      <div class="thumb" style="left:2px;top:139px;width:13px;height:259px"></div>
      <div class="arrow-dn" style="left:4px;top:501px"></div>
    </div>
  </div>
  <div id="bottompanel">
    <div class="t" style="left:36px;top:22px;color:#0f5bb0;font-weight:bold;letter-spacing:.3px">已选合同 ( 0 )</div>
    <div class="abs" style="left:20px;top:50px;width:125px;height:3px;background:#0f5bb0"></div>
    <div class="t" style="left:163px;top:22px;color:#90a4c4;letter-spacing:.3px">已选报告 ( 0 )</div>
    <div class="t" style="left:623px;top:21px;color:#999">展开</div>
    <div class="t" style="left:895px;top:22px;color:#0f5bb0">清除本标签记录</div>
    <div class="t" style="left:1025px;top:22px;color:#0f5bb0;letter-spacing:.25px">清除全部选择记录</div>
  </div>
</div>
<!-- TASKBAR -->
<div id="taskbar"><div id="tbin" style="position:absolute;left:0;top:-2px;width:1600px;height:42px">
<div class="abs" style="left:9px;top:4px;width:36px;height:36px;border-radius:50%;background:radial-gradient(ellipse 70% 55% at 50% 18%,rgba(255,255,255,.65) 0,rgba(255,255,255,.18) 60%,rgba(255,255,255,0) 100%),radial-gradient(circle at 50% 95%,#3fd0f5 0,#1f8fd0 35%,#15589c 65%,#0e3f80 100%);box-shadow:0 0 0 1px #123f78,0 0 2px 2px rgba(210,230,250,.55)"></div><svg class="abs" style="left:15.0px;top:11.0px" width="24" height="22" viewBox="0 0 24 22"><path d="M3 5.200c2.800-1.700 5.400-1.900 8.200-.4l-1.300 6.200c-2.700-1.400-5.300-1.200-8.100.4z" fill="#f0602a"/><path d="M12.600 5.300c2.800 1.400 5.400 1.300 8.200-.5l-1.300 6.200c-2.800 1.800-5.400 1.800-8.200.5z" fill="#8cc63f"/><path d="M1.500 12.600c2.800-1.600 5.400-1.800 8.200-.4L8.400 18.400c-2.700-1.400-5.300-1.200-8.100.4z" fill="#35a8ea"/><path d="M11.100 12.700c2.800 1.400 5.400 1.300 8.200-.5L18 18.400c-2.800 1.800-5.400 1.800-8.200.5z" fill="#fdba12"/></svg><svg class="abs" style="left:58px;top:7px" width="10" height="32" viewBox="0 0 10 32" shape-rendering="crispEdges"><rect x="1" y="1" width="2" height="2" fill="#dfe6ee" opacity=".55"/><rect x="0" y="0" width="2" height="2" fill="#2b3442"/><rect x="4" y="1" width="2" height="2" fill="#dfe6ee" opacity=".55"/><rect x="3" y="0" width="2" height="2" fill="#2b3442"/><rect x="7" y="1" width="2" height="2" fill="#dfe6ee" opacity=".55"/><rect x="6" y="0" width="2" height="2" fill="#2b3442"/><rect x="1" y="5" width="2" height="2" fill="#dfe6ee" opacity=".55"/><rect x="0" y="4" width="2" height="2" fill="#2b3442"/><rect x="4" y="5" width="2" height="2" fill="#dfe6ee" opacity=".55"/><rect x="3" y="4" width="2" height="2" fill="#2b3442"/><rect x="7" y="5" width="2" height="2" fill="#dfe6ee" opacity=".55"/><rect x="6" y="4" width="2" height="2" fill="#2b3442"/><rect x="1" y="9" width="2" height="2" fill="#dfe6ee" opacity=".55"/><rect x="0" y="8" width="2" height="2" fill="#2b3442"/><rect x="4" y="9" width="2" height="2" fill="#dfe6ee" opacity=".55"/><rect x="3" y="8" width="2" height="2" fill="#2b3442"/><rect x="7" y="9" width="2" height="2" fill="#dfe6ee" opacity=".55"/><rect x="6" y="8" width="2" height="2" fill="#2b3442"/><rect x="1" y="13" width="2" height="2" fill="#dfe6ee" opacity=".55"/><rect x="0" y="12" width="2" height="2" fill="#2b3442"/><rect x="4" y="13" width="2" height="2" fill="#dfe6ee" opacity=".55"/><rect x="3" y="12" width="2" height="2" fill="#2b3442"/><rect x="7" y="13" width="2" height="2" fill="#dfe6ee" opacity=".55"/><rect x="6" y="12" width="2" height="2" fill="#2b3442"/><rect x="1" y="17" width="2" height="2" fill="#dfe6ee" opacity=".55"/><rect x="0" y="16" width="2" height="2" fill="#2b3442"/><rect x="4" y="17" width="2" height="2" fill="#dfe6ee" opacity=".55"/><rect x="3" y="16" width="2" height="2" fill="#2b3442"/><rect x="7" y="17" width="2" height="2" fill="#dfe6ee" opacity=".55"/><rect x="6" y="16" width="2" height="2" fill="#2b3442"/><rect x="1" y="21" width="2" height="2" fill="#dfe6ee" opacity=".55"/><rect x="0" y="20" width="2" height="2" fill="#2b3442"/><rect x="4" y="21" width="2" height="2" fill="#dfe6ee" opacity=".55"/><rect x="3" y="20" width="2" height="2" fill="#2b3442"/><rect x="7" y="21" width="2" height="2" fill="#dfe6ee" opacity=".55"/><rect x="6" y="20" width="2" height="2" fill="#2b3442"/><rect x="1" y="25" width="2" height="2" fill="#dfe6ee" opacity=".55"/><rect x="0" y="24" width="2" height="2" fill="#2b3442"/><rect x="4" y="25" width="2" height="2" fill="#dfe6ee" opacity=".55"/><rect x="3" y="24" width="2" height="2" fill="#2b3442"/><rect x="7" y="25" width="2" height="2" fill="#dfe6ee" opacity=".55"/><rect x="6" y="24" width="2" height="2" fill="#2b3442"/><rect x="1" y="29" width="2" height="2" fill="#dfe6ee" opacity=".55"/><rect x="0" y="28" width="2" height="2" fill="#2b3442"/><rect x="4" y="29" width="2" height="2" fill="#dfe6ee" opacity=".55"/><rect x="3" y="28" width="2" height="2" fill="#2b3442"/><rect x="7" y="29" width="2" height="2" fill="#dfe6ee" opacity=".55"/><rect x="6" y="28" width="2" height="2" fill="#2b3442"/></svg><div class="tbtn stack" style="left:76px;width:51px;background:linear-gradient(rgba(255,255,255,.82),rgba(255,255,255,.58) 48%,rgba(255,255,255,.42) 52%,rgba(255,255,255,.62))"></div><svg class="abs" style="left:83.0px;top:3.0px" width="36" height="38" viewBox="0 0 36 38"><circle cx="18.500" cy="21.500" r="13.200" fill="#fdfdfd"/><text x="18.800" y="34.300" text-anchor="middle" font-family="Liberation Sans,sans-serif" font-weight="bold" font-size="46" fill="#5fc02a">e</text><path d="M6.500 35C3 27 9 11 31 5.500" fill="none" stroke="#5fc02a" stroke-width="2.600" stroke-linecap="round"/><path d="M22 6.500C26 5 29.500 4.500 31.500 5c-1 .8-3 1.800-5 2.500z" fill="#5fc02a"/></svg><div class="tbtn stack" style="left:137px;width:55px"></div><svg class="abs" style="left:147.0px;top:8.0px" width="34" height="30" viewBox="0 0 34 30"><path d="M1.500 4.500h9.500l2 2H30v5H1.500z" fill="#e9c65c"/><path d="M4 2.500h9l1.500 1.800H24v4H4z" fill="#f7e6a6" stroke="#d8b44a" stroke-width=".5"/><path d="M11.500 4.200h9l1.500 1.800h8v4H11.500z" fill="#f7e6a6" stroke="#d8b44a" stroke-width=".5"/><rect x="4.500" y="3" width="3" height="1.600" fill="#2f9e3a"/><rect x="12.500" y="4.700" width="3" height="1.600" fill="#d43a2a"/><rect x="21" y="6.200" width="3" height="1.600" fill="#2a7ee0"/><path d="M1.500 8.500h31v20h-31z" fill="#f8df8c"/><path d="M1.500 8.500h31v2.500h-31z" fill="#fcf0c0"/><path d="M1.500 8.500h31v20h-31z" fill="none" stroke="#d9b84e" stroke-width=".6"/><path d="M5.500 18.500c0-1.700 1.200-2.800 2.800-2.800h15.400c1.600 0 2.800 1.100 2.800 2.800V29.500H21.500v-7h-11v7H5.500z" fill="#3f9fe2" stroke="#2a7cc4" stroke-width=".6"/><path d="M7 19c0-1.100.7-1.800 1.800-1.800h14.400c1.100 0 1.800.7 1.800 1.800v2.200H7z" fill="#b5def8"/><path d="M8 13l1 4 4 1-4 1-1 4-1-4-4-1 4-1z" fill="#fff" opacity=".9"/></svg><svg class="abs" style="left:213.0px;top:8.0px" width="32" height="28" viewBox="0 0 32 28"><ellipse cx="12" cy="10.500" rx="10.500" ry="9" fill="#2fc44e"/><path d="M5 17l-1 5 5-3z" fill="#2fc44e"/><circle cx="8.500" cy="7.500" r="1.400" fill="#1a7a2a"/><circle cx="15.500" cy="7.500" r="1.400" fill="#1a7a2a"/><ellipse cx="22" cy="18" rx="8.500" ry="7.200" fill="#f1f1f1"/><path d="M27 23.500l1.500 4-4.500-2z" fill="#f1f1f1"/><circle cx="19.200" cy="16" r="1.100" fill="#888"/><circle cx="24.800" cy="16" r="1.100" fill="#888"/></svg><div class="tbtn" style="left:262px;width:58px"></div><svg class="abs" style="left:274.0px;top:6.0px" width="34" height="32" viewBox="0 0 34 32"><path d="M6 2.500h17.500c1.500 0 2 .7 2 2V26H4V4.500c0-1.300.7-2 2-2z" fill="#e8eef8" stroke="#2d5cb0" stroke-width="1.600"/><path d="M4.500 8c3-3 9-5 14-5" stroke="#7fa3e0" stroke-width="1.200" fill="none"/><g transform="rotate(5 22 20)"><rect x="11.500" y="8" width="20.500" height="22" fill="#fff" stroke="#b8c4d8" stroke-width=".7"/><text x="13.500" y="19" font-family="Liberation Sans,sans-serif" font-weight="bold" font-style="italic" font-size="12" fill="#2d5cb0">W</text><path d="M25.500 11.500h5M25.500 14h5M25.500 16.500h5M14 21.500h16.500M14 24h16.500M14 26.500h16.500" stroke="#2d5cb0" stroke-width="1.300"/></g></svg><div class="tbtn" style="left:323.500px;width:51.500px"></div><svg class="abs" style="left:332.0px;top:6.0px" width="34" height="32" viewBox="0 0 34 32"><path d="M6 2.500h17.500c1.500 0 2 .7 2 2V26H4V4.500c0-1.300.7-2 2-2z" fill="#eaf4e2" stroke="#3f9a22" stroke-width="1.600"/><g transform="rotate(5 22 20)"><rect x="8.500" y="8.500" width="24" height="20.500" fill="#fbfdf8" stroke="#b8c8b0" stroke-width=".7"/><path d="M10.500 11l9 8.500M19.500 11l-9 8.500" stroke="#2f6e1a" stroke-width="3"/><rect x="22.500" y="10.500" width="3.800" height="3.500" fill="#5a9a3a"/><rect x="27.300" y="10.500" width="3.800" height="3.500" fill="#5a9a3a"/><rect x="22.500" y="15.500" width="3.800" height="3.500" fill="#5a9a3a"/><rect x="27.300" y="15.500" width="3.800" height="3.500" fill="#5a9a3a"/><rect x="10.500" y="22" width="5.500" height="4.500" fill="#5a9a3a"/><rect x="17" y="22" width="5.500" height="4.500" fill="#5a9a3a"/><rect x="23.500" y="22" width="7.600" height="4.500" fill="#5a9a3a"/></g></svg><div class="abs" style="left:376.500px;top:3px;width:3px;height:39px;border-left:1px solid #55627a;border-right:1px solid #55627a;opacity:.7"></div><div class="tbtn" style="left:385.500px;width:59px"></div><svg class="abs" style="left:397.0px;top:5.5px" width="36" height="34" viewBox="0 0 36 34"><defs><radialGradient id="lk" cx=".35" cy=".3" r=".8"><stop offset="0" stop-color="#5ab8f0"/><stop offset=".5" stop-color="#1f78c8"/><stop offset="1" stop-color="#0f4f96"/></radialGradient></defs><path d="M10.500 12V9.500a8.200 8.200 0 0 1 16.400 0V16" fill="none" stroke="#1a4f90" stroke-width="2.600"/><circle cx="14.500" cy="20" r="12.500" fill="url(#lk)"/><path d="M4 15c3-6 12-8 18-3" stroke="#bfe4fb" stroke-width="1.200" fill="none" opacity=".8"/><circle cx="15.500" cy="17.500" r="2.800" fill="#0b2448"/><path d="M14.200 18.500L11.500 28h6l-.8-9.500z" fill="#0b2448"/><g stroke="#d6ecfb" stroke-width=".8"><ellipse cx="28" cy="30" rx="6.300" ry="2.600" fill="#2a7fd0"/><ellipse cx="27.500" cy="26.800" rx="6.300" ry="2.600" fill="#2a7fd0"/><ellipse cx="28.500" cy="23.600" rx="6.300" ry="2.600" fill="#2a7fd0"/><ellipse cx="28" cy="20.400" rx="6.300" ry="2.600" fill="#3a94e0"/></g></svg><div class="tbtn" style="left:448px;width:58.500px"></div><svg class="abs" style="left:462.5px;top:7.5px" width="30" height="30" viewBox="0 0 30 30"><defs><linearGradient id="bd" x1="0" y1="0" x2="0" y2="1"><stop offset="0" stop-color="#2aa2ff"/><stop offset="1" stop-color="#1480f5"/></linearGradient></defs><rect x=".8" y=".8" width="28.400" height="28.400" rx="6.500" fill="url(#bd)"/><path d="M8 5c6 1.500 11.500 5 14.500 10.500-1.300 1.700-3 3.500-4.200 5.500-1 1.700-1.700 3.500-2.500 5.200-.3-2 0-4 .2-6C12 19 9.500 16.500 8.800 13.500c1.300 1 2.700 1.600 4 1.800C10.500 13 8.700 9.500 8 5z" fill="#fff"/></svg><svg class="abs" style="left:989px;top:7px" width="10" height="32" viewBox="0 0 10 32" shape-rendering="crispEdges"><rect x="1" y="1" width="2" height="2" fill="#dfe6ee" opacity=".55"/><rect x="0" y="0" width="2" height="2" fill="#2b3442"/><rect x="4" y="1" width="2" height="2" fill="#dfe6ee" opacity=".55"/><rect x="3" y="0" width="2" height="2" fill="#2b3442"/><rect x="7" y="1" width="2" height="2" fill="#dfe6ee" opacity=".55"/><rect x="6" y="0" width="2" height="2" fill="#2b3442"/><rect x="1" y="5" width="2" height="2" fill="#dfe6ee" opacity=".55"/><rect x="0" y="4" width="2" height="2" fill="#2b3442"/><rect x="4" y="5" width="2" height="2" fill="#dfe6ee" opacity=".55"/><rect x="3" y="4" width="2" height="2" fill="#2b3442"/><rect x="7" y="5" width="2" height="2" fill="#dfe6ee" opacity=".55"/><rect x="6" y="4" width="2" height="2" fill="#2b3442"/><rect x="1" y="9" width="2" height="2" fill="#dfe6ee" opacity=".55"/><rect x="0" y="8" width="2" height="2" fill="#2b3442"/><rect x="4" y="9" width="2" height="2" fill="#dfe6ee" opacity=".55"/><rect x="3" y="8" width="2" height="2" fill="#2b3442"/><rect x="7" y="9" width="2" height="2" fill="#dfe6ee" opacity=".55"/><rect x="6" y="8" width="2" height="2" fill="#2b3442"/><rect x="1" y="13" width="2" height="2" fill="#dfe6ee" opacity=".55"/><rect x="0" y="12" width="2" height="2" fill="#2b3442"/><rect x="4" y="13" width="2" height="2" fill="#dfe6ee" opacity=".55"/><rect x="3" y="12" width="2" height="2" fill="#2b3442"/><rect x="7" y="13" width="2" height="2" fill="#dfe6ee" opacity=".55"/><rect x="6" y="12" width="2" height="2" fill="#2b3442"/><rect x="1" y="17" width="2" height="2" fill="#dfe6ee" opacity=".55"/><rect x="0" y="16" width="2" height="2" fill="#2b3442"/><rect x="4" y="17" width="2" height="2" fill="#dfe6ee" opacity=".55"/><rect x="3" y="16" width="2" height="2" fill="#2b3442"/><rect x="7" y="17" width="2" height="2" fill="#dfe6ee" opacity=".55"/><rect x="6" y="16" width="2" height="2" fill="#2b3442"/><rect x="1" y="21" width="2" height="2" fill="#dfe6ee" opacity=".55"/><rect x="0" y="20" width="2" height="2" fill="#2b3442"/><rect x="4" y="21" width="2" height="2" fill="#dfe6ee" opacity=".55"/><rect x="3" y="20" width="2" height="2" fill="#2b3442"/><rect x="7" y="21" width="2" height="2" fill="#dfe6ee" opacity=".55"/><rect x="6" y="20" width="2" height="2" fill="#2b3442"/><rect x="1" y="25" width="2" height="2" fill="#dfe6ee" opacity=".55"/><rect x="0" y="24" width="2" height="2" fill="#2b3442"/><rect x="4" y="25" width="2" height="2" fill="#dfe6ee" opacity=".55"/><rect x="3" y="24" width="2" height="2" fill="#2b3442"/><rect x="7" y="25" width="2" height="2" fill="#dfe6ee" opacity=".55"/><rect x="6" y="24" width="2" height="2" fill="#2b3442"/><rect x="1" y="29" width="2" height="2" fill="#dfe6ee" opacity=".55"/><rect x="0" y="28" width="2" height="2" fill="#2b3442"/><rect x="4" y="29" width="2" height="2" fill="#dfe6ee" opacity=".55"/><rect x="3" y="28" width="2" height="2" fill="#2b3442"/><rect x="7" y="29" width="2" height="2" fill="#dfe6ee" opacity=".55"/><rect x="6" y="28" width="2" height="2" fill="#2b3442"/></svg><div class="tray" style="left:1005.500px;top:12px;background:#f0601a;border-radius:2px"><div style="position:absolute;left:1px;top:1px;width:14px;height:14px;border:1px solid #fff;border-radius:2px;color:#fff;font-size:11px;font-weight:bold;line-height:12px;text-align:center">S</div></div><svg class="abs" style="left:1032.0px;top:13px" width="8" height="6" viewBox="0 0 8 6"><rect x=".5" y="1.500" width="5" height="4" fill="none" stroke="#fff" stroke-width="1"/><path d="M2.500 .5h5v3.500" fill="none" stroke="#fff" stroke-width="1"/></svg><div class="abs" style="left:1032.500px;top:24px;width:0;height:0;border-left:3px solid transparent;border-right:3px solid transparent;border-top:3.500px solid #fff"></div><svg class="abs" style="left:1050.0px;top:15px" width="16" height="16" viewBox="0 0 16 16"><rect x="4" y="1" width="8" height="5" fill="#f4f4f4" stroke="#555" stroke-width=".8"/><rect x="1" y="5.500" width="14" height="6.500" rx="1" fill="#c8ccd2" stroke="#4a4f57" stroke-width=".8"/><rect x="4" y="10" width="8" height="5" fill="#fff" stroke="#555" stroke-width=".8"/><rect x="2.500" y="7" width="2" height="1.200" fill="#3c3"/></svg><div class="tray" style="left:1074px;background:linear-gradient(135deg,#6a5cf5,#c05af0);border-radius:3px"><div style="color:#fff;font-size:10px;line-height:16px;text-align:center;font-weight:bold">⁄</div></div><div class="tray" style="left:1098px;background:#1a7cf0;border-radius:2px"><svg width="16" height="16" viewBox="0 0 16 16"><path d="M4 3c3 0 5.500 1.200 7 3.500-1-.2-2 0-2.500.3 1 .8 1.600 2 1.600 3-1-.8-1.800-1.200-2.800-1.200 0 1.700-.3 3-1 4.500-.2-2-.8-4-1.700-5.300C4.200 6.500 4 5 4 3z" fill="#fff"/></svg></div><svg class="abs" style="left:1122.0px;top:15px" width="16" height="16" viewBox="0 0 16 16"><path d="M1.500 2.500h6v5.500h-6zM8.500 2.500h6v5.500h-6zM1.500 9h6v2c0 2-3 3.500-3 3.500S1.500 13 1.500 11zM8.500 9h6v2c0 2-3 3.500-3 3.500S8.500 13 8.500 11z" fill="#c8232a"/></svg><div class="tray" style="left:1146px;background:#fff;border-radius:4px"><svg width="16" height="16" viewBox="0 0 16 16"><path d="M3 4.500h4l1 1.200h5V12H3z" fill="#2aa0f0"/><path d="M5.500 6.500h7.500v5.500h-7.500z" fill="#6ac8ff"/></svg></div><svg class="abs" style="left:1170.0px;top:15px" width="16" height="16" viewBox="0 0 16 16"><circle cx="8" cy="8" r="7.500" fill="#5cc82a"/><path d="M4 8.500h8c0-2.500-1.700-4.200-4-4.200S4 6 4 8.300c0 2.300 1.700 4 4 4 1.700 0 3-.8 3.700-2.200H9.500c-.4.500-.9.700-1.500.700-1.200 0-2-.8-2-2.300zm.2-1.300c.2-1.100 1-1.700 1.900-1.700s1.700.6 1.900 1.700z" fill="#fff"/></svg><div class="tray" style="left:1194px;background:#c01020;border-radius:2px"><div style="color:#fff;font-size:6px;line-height:16px;text-align:center;font-weight:bold;letter-spacing:-.3px">msi</div></div><div class="tray" style="left:1218px;background:#fff;border-radius:4px"><svg width="16" height="16" viewBox="0 0 16 16"><path d="M3 4h10v3.500H9.800V13H6.200V9H3z" fill="#1a9af0"/></svg></div><div class="tray" style="left:1242px;background:#f2f2f2;border-radius:4px"><svg width="16" height="16" viewBox="0 0 16 16"><rect x="5" y="3" width="6" height="3" fill="#333"/><rect x="3" y="5.500" width="10" height="5" rx="1" fill="#333"/><rect x="5" y="9" width="6" height="4" fill="#fff" stroke="#333" stroke-width=".8"/></svg></div><svg class="abs" style="left:1266.0px;top:15px" width="16" height="16" viewBox="0 0 16 16"><path d="M3.500 9h9c0-2.800-1.900-4.700-4.500-4.700S3.500 6.200 3.500 8.800s1.900 4.500 4.500 4.500c1.900 0 3.400-.9 4.100-2.500H9.700c-.4.600-1 .8-1.700.8-1.300 0-2.200-.9-2.300-2.600zm.3-1.500c.2-1.200 1.100-1.900 2.100-1.900s1.900.7 2.100 1.900z" fill="#1a6ad8" stroke="#fff" stroke-width=".6"/><path d="M1.500 13c-1-2.500 3-8 11.500-11-5 2.500-8.500 6.500-9 10-.3 2-1.500 2.500-2.500 1z" fill="#fff"/></svg><svg class="abs" style="left:1289.0px;top:15px" width="18" height="16" viewBox="0 0 18 16"><rect x="3.500" y="1" width="11" height="8" fill="#fff" stroke="#222" stroke-width="1"/><rect x="5" y="2.500" width="8" height="5" fill="#1a5ad0"/><path d="M8 3.500h2v3H8z" fill="#fff"/><path d="M1 10.500h16v2H1zM2 13.500h14v2H2z" fill="#f2f2f2" stroke="#222" stroke-width=".8"/></svg><svg class="abs" style="left:1314.0px;top:15px" width="16" height="16" viewBox="0 0 16 16"><path d="M8 1.500A6.500 6.500 0 1 0 14.500 8c0 2-1.500 3.500-3.500 3.500S7.500 10 7.500 8.500 8.500 6 10 6c-1.500-1-4-.5-4.500 2-.5 3 2 5 5 5" fill="none" stroke="#d01a1a" stroke-width="2.200"/><path d="M2 3l3 4M13.500 2.500L11 5" stroke="#d01a1a" stroke-width="1.500"/></svg><svg class="abs" style="left:1338.0px;top:15px" width="16" height="16" viewBox="0 0 16 16"><ellipse cx="8" cy="8" rx="7.800" ry="6.500" fill="#f2d21a" stroke="#b09000" stroke-width=".6"/><path d="M8 4v8M4 8h8" stroke="#0a8a1a" stroke-width="2.600"/></svg><svg class="abs" style="left:1362.0px;top:15px" width="16" height="16" viewBox="0 0 16 16"><rect x="6" y="1" width="9" height="7" rx="1" fill="#3ac8e8" transform="rotate(-25 10 5)"/><rect x="1" y="7" width="9" height="7" rx="1" fill="#3ac85a" transform="rotate(-25 5 10)"/><path d="M4 6l8 4" stroke="#f2f2f2" stroke-width="1.200"/></svg><svg class="abs" style="left:1385.0px;top:15px" width="18" height="16" viewBox="0 0 18 16"><rect x="5.500" y="3.500" width="11" height="8" fill="#fff" stroke="#222" stroke-width="1"/><path d="M8 14.500h6M11 11.500v3" stroke="#222" stroke-width="1.200"/><rect x="1" y="1" width="4" height="6" fill="#f2f2f2" stroke="#222" stroke-width=".9"/><path d="M3 7v5h3" fill="none" stroke="#222" stroke-width="1"/></svg><svg class="abs" style="left:1409.0px;top:15px" width="18" height="16" viewBox="0 0 18 16"><path d="M1.500 5.500h3l4-3.500v12l-4-3.500h-3z" fill="#f2f2f2" stroke="#555" stroke-width=".8"/><circle cx="13" cy="11.500" r="4" fill="#e0231a"/><path d="M11.300 9.800l3.400 3.400M14.700 9.800l-3.400 3.400" stroke="#fff" stroke-width="1.300"/></svg><svg class="abs" style="left:1432.0px;top:15px" width="18" height="16" viewBox="0 0 18 16"><rect x="6" y="10" width="2.200" height="5" fill="#f2f2f2"/><rect x="9.300" y="7" width="2.200" height="8" fill="#f2f2f2"/><rect x="12.600" y="4" width="2.200" height="11" fill="#f2f2f2"/><rect x="15.800" y="1.500" width="1.800" height="13.500" fill="#f2f2f2"/><circle cx="5" cy="5" r="4.500" fill="#e0231a"/><path d="M3.200 3.200l3.600 3.600M6.800 3.200L3.200 6.800" stroke="#fff" stroke-width="1.400"/></svg><div class="abs" style="left:1462px;top:6px;width:82px;text-align:center;font-size:12px;line-height:16px;color:#fff">15:15</div><div class="abs" style="left:1462px;top:24px;width:82px;text-align:center;font-size:12px;line-height:16px;color:#fff">2025-06-05</div><div class="abs" style="left:1557px;top:16px;width:17px;height:14px;background:#fff;border-radius:1px"></div><div class="abs" style="left:1563px;top:19px;width:0;height:0;border-top:4px solid transparent;border-bottom:4px solid transparent;border-left:6px solid #4a5568"></div><div class="abs" style="left:1568px;top:23.500px;width:14px;height:14.500px;background:#dc1418;border-radius:2px;color:#fff;font-size:11px;line-height:14.500px;text-align:center">1</div><div class="abs" style="left:1586px;top:2px;width:14px;height:40px;border-left:1px solid #4d5a6c;background:linear-gradient(90deg,rgba(255,255,255,.45),rgba(255,255,255,.15));box-shadow:inset 1px 0 0 rgba(255,255,255,.5)"></div>
</div></div>
</body>
</html>
